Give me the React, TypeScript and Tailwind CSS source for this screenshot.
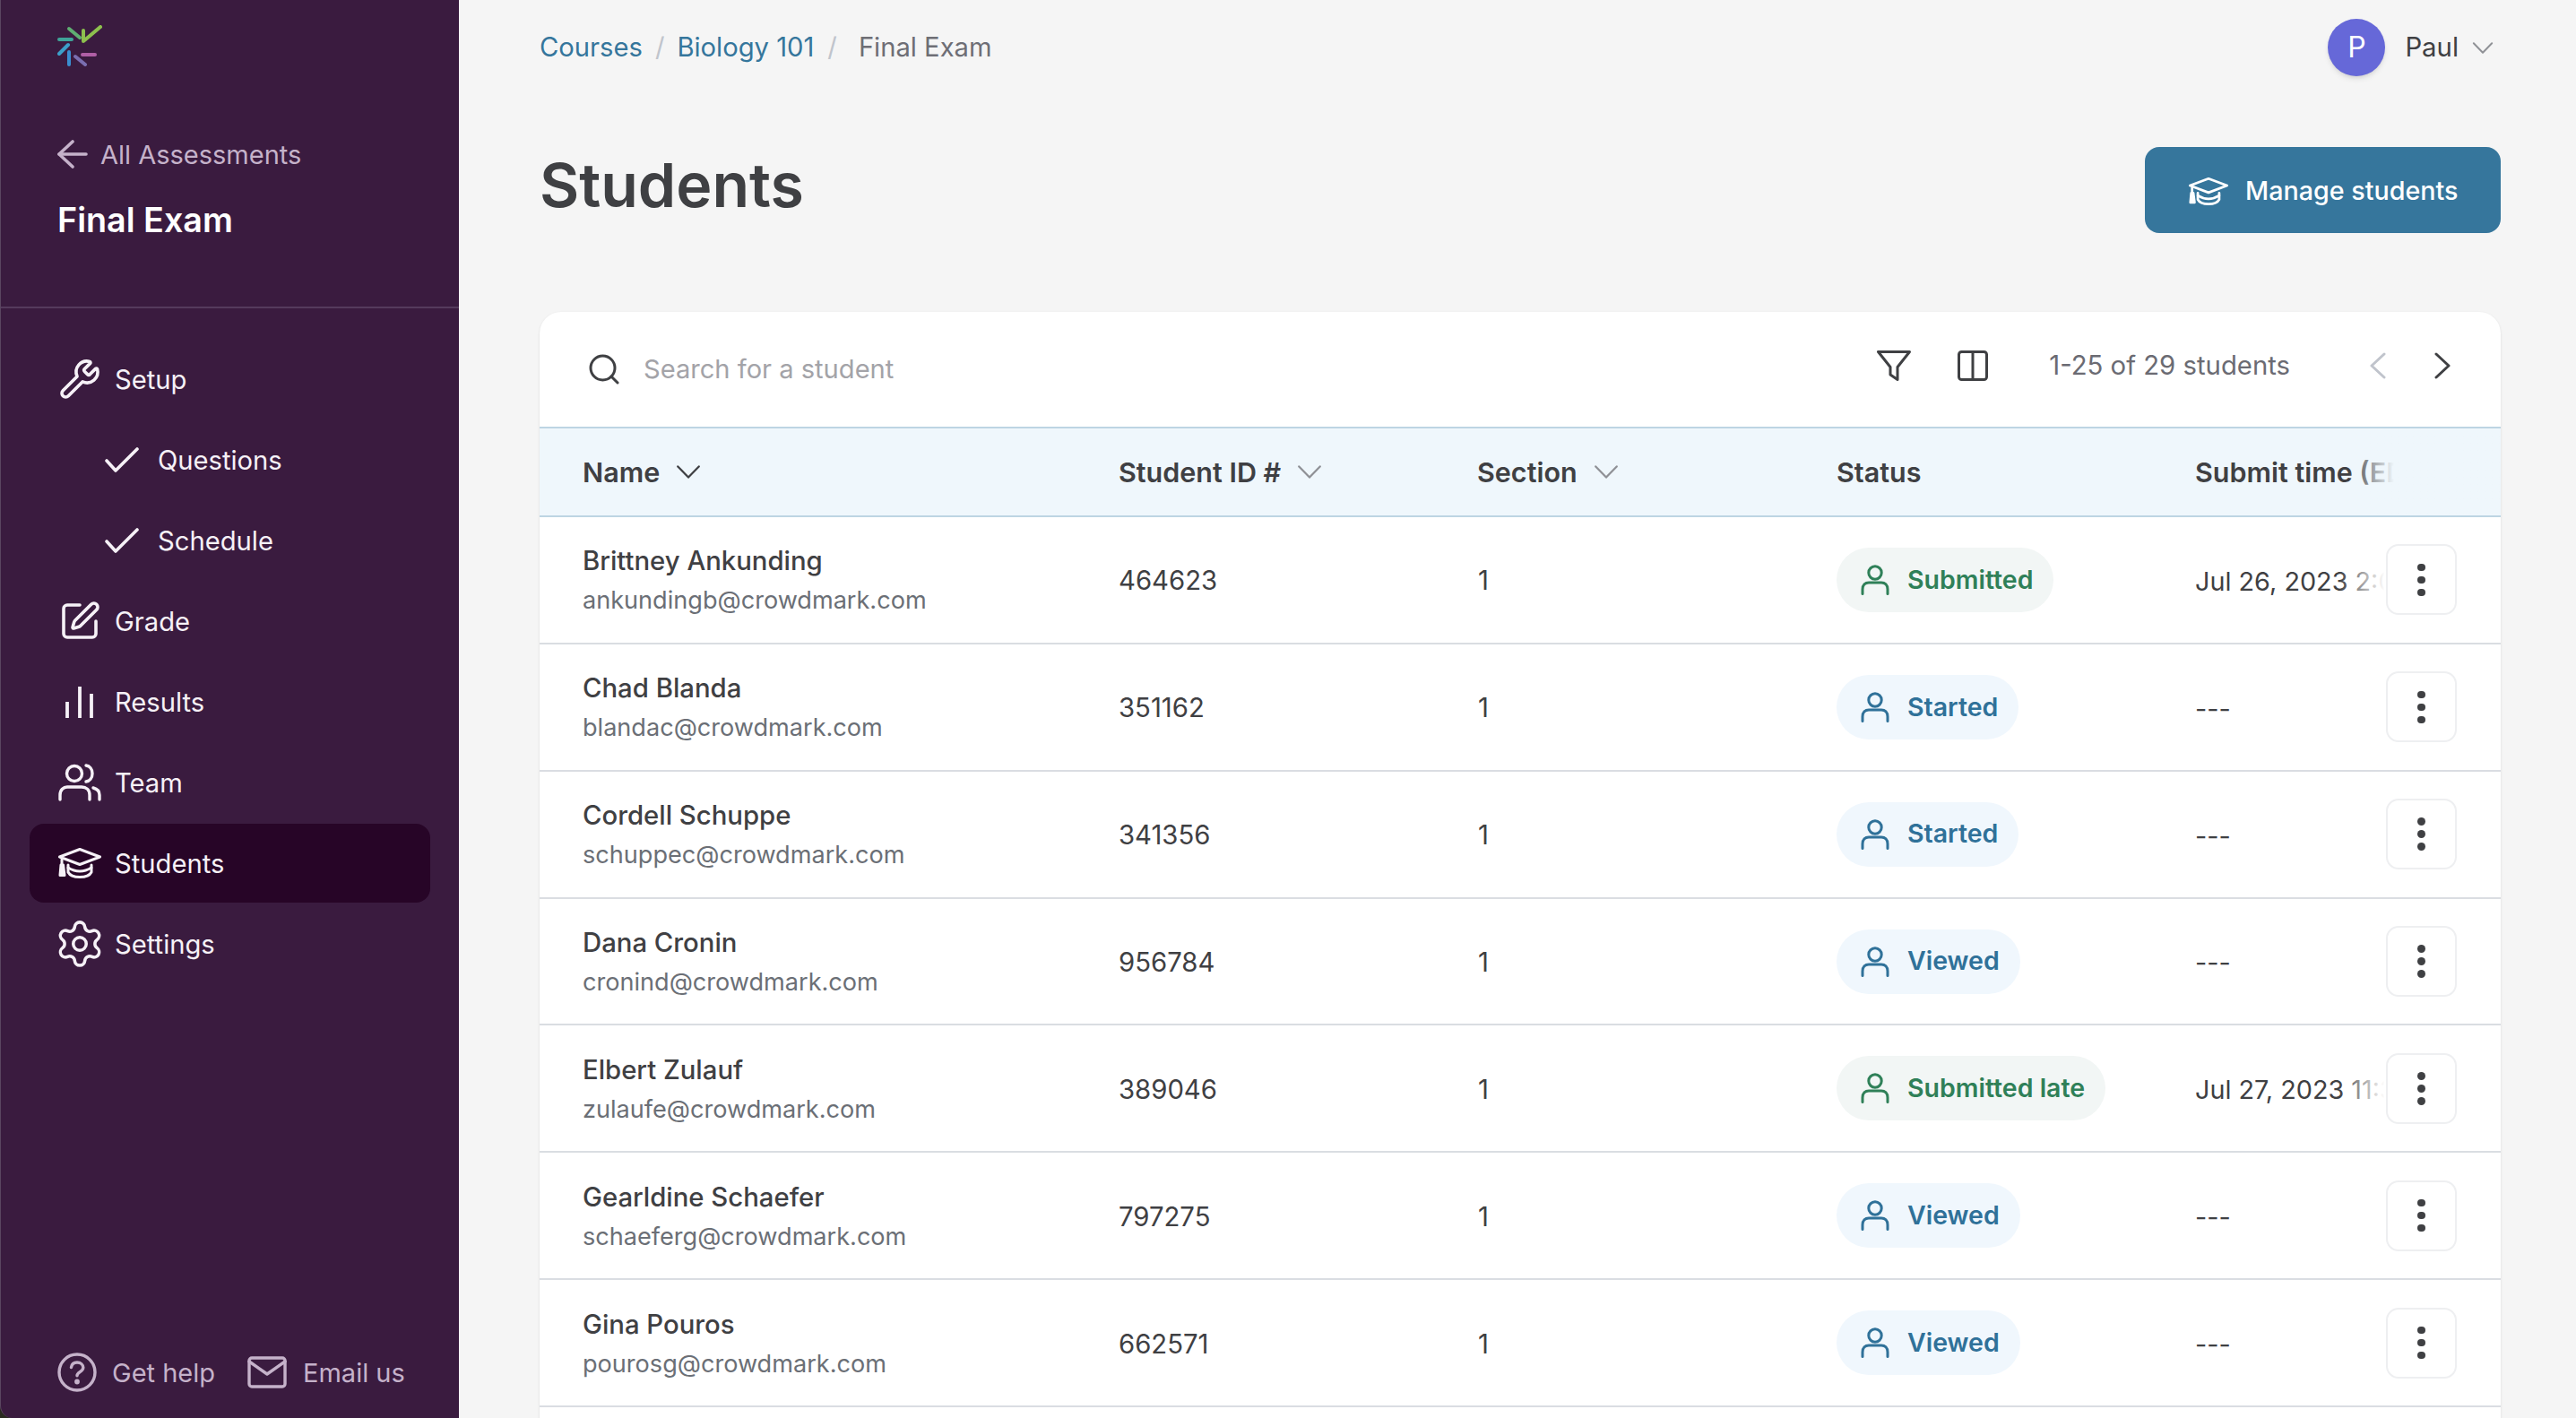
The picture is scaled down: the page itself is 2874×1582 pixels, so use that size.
import React from "react";
import {Settings, SquarePen, Wrench} from "lucide-react";

type Student = {
  name: string;
  email: string;
  id: string;
  status: "Submitted" | "Started" | "Viewed" | "Submitted late";
  time: string;
};

const students: Student[] = [
  {name: "Brittney Ankunding", email: "ankundingb@crowdmark.com", id: "464623", status: "Submitted", time: "Jul 26, 2023 2:00 PM"},
  {name: "Chad Blanda", email: "blandac@crowdmark.com", id: "351162", status: "Started", time: "---"},
  {name: "Cordell Schuppe", email: "schuppec@crowdmark.com", id: "341356", status: "Started", time: "---"},
  {name: "Dana Cronin", email: "cronind@crowdmark.com", id: "956784", status: "Viewed", time: "---"},
  {name: "Elbert Zulauf", email: "zulaufe@crowdmark.com", id: "389046", status: "Submitted late", time: "Jul 27, 2023 11:30 AM"},
  {name: "Gearldine Schaefer", email: "schaeferg@crowdmark.com", id: "797275", status: "Viewed", time: "---"},
  {name: "Gina Pouros", email: "pourosg@crowdmark.com", id: "662571", status: "Viewed", time: "---"},
];

const columns = "grid grid-cols-[646px_400px_401px_400px_1fr]";

function Chevron({className}: {className?: string}) {
  return (
    <svg viewBox="0 0 28 16" className={className} fill="none" stroke="currentColor" strokeWidth="2.4" strokeLinecap="round" strokeLinejoin="round">
      <path d="M1.5 1.5 14 14.5 26.5 1.5" />
    </svg>
  );
}

function CapIcon({className}: {className?: string}) {
  return (
    <svg viewBox="0 0 48 34" className={className} fill="none" stroke="currentColor" strokeWidth="3" strokeLinecap="round" strokeLinejoin="round">
      <path d="M24 1.500 46.500 10 24 18.500 1.500 10Z" />
      <path d="M11 19v8c2 4 7.500 5.500 13 5.500S35 31 37 27v-8" />
      <path d="M11 22c4 2.500 8.500 4 13 4s9-1.500 13-4" />
      <path d="M4 13v6" />
      <path d="M3 19h2.500l1.500 11.500H2Z" fill="currentColor" />
    </svg>
  );
}

function PersonIcon({className}: {className?: string}) {
  return (
    <svg viewBox="0 0 32 34" className={className} fill="none" stroke="currentColor" strokeWidth="3" strokeLinecap="round">
      <circle cx="16" cy="9" r="7.200" />
      <path d="M2 32.500v-5c0-5 3-7.500 7-7.500h14c4 0 7 2.500 7 7.500v5" />
    </svg>
  );
}

function NavRow({icon, label, active}: {icon: React.ReactNode; label: string; active?: boolean}) {
  return (
    <div className={`mx-[32px] flex h-[88px] items-center rounded-[16px] pl-[32px] ${active ? "bg-[#270527]" : ""}`}>
      <span className="flex w-[48px] justify-center">{icon}</span>
      <span className="ml-[15px] pt-[2px] text-[29.200px] leading-none text-[#f6f1f7]">{label}</span>
    </div>
  );
}

function SubRow({label}: {label: string}) {
  return (
    <div className="mx-[32px] flex h-[88px] items-center pl-[84px]">
      <svg viewBox="0 0 38 28" className="h-[28px] w-[38px]" fill="none" stroke="#f6f1f7" strokeWidth="3.600" strokeLinecap="round" strokeLinejoin="round">
        <path d="M2 15 12 26 36 2" />
      </svg>
      <span className="ml-[21px] pt-[2px] text-[29.200px] leading-none text-[#f6f1f7]">{label}</span>
    </div>
  );
}

function Sidebar() {
  return (
    <aside className="flex h-full w-[512px] shrink-0 flex-col rounded-bl-[14px] border-l border-[#5a4560] bg-[#3a1b3f]">
      <div className="h-[344px] border-b-2 border-[#553a5c] pl-[63px]">
        <svg viewBox="0 0 50 46" className="mt-[28px] h-[46px] w-[50px]" fill="none" strokeWidth="4" strokeLinecap="round" strokeLinejoin="round">
          <path d="M29 6v12L48 2" stroke="#8dc04e" />
          <path d="M13 4 25 14" stroke="#5fae72" />
          <path d="M2 16H16" stroke="#3fa398" />
          <path d="M12 22 2 32" stroke="#3c9fc9" />
          <path d="M13 30V44" stroke="#3a8ed0" />
          <path d="M20 35 31 44" stroke="#7a6eb0" />
          <path d="M28 33H42" stroke="#b05fa6" />
        </svg>
        <div className="mt-[78px] flex h-[40px] items-center text-[#c5b2ca]">
          <svg viewBox="0 0 34 32" className="h-[32px] w-[34px]" fill="none" stroke="currentColor" strokeWidth="3.600" strokeLinecap="round" strokeLinejoin="round">
            <path d="M32 16H2" />
            <path d="M17 2 2 16 17 30" />
          </svg>
          <span className="ml-[14px] text-[29px] leading-none">All Assessments</span>
        </div>
        <div className="mt-[30px] text-[37.700px] leading-[46px] font-semibold text-white">Final Exam</div>
      </div>
      <nav className="mt-[35px] flex flex-col gap-[2px]">
        <NavRow label="Setup" icon={<Wrench size={50} strokeWidth={1.800} color="#f6f1f7" className="scale-x-[-1] rotate-90" />} />
        <SubRow label="Questions" />
        <SubRow label="Schedule" />
        <NavRow label="Grade" icon={<SquarePen size={52} strokeWidth={1.800} color="#f6f1f7" />} />
        <NavRow
          label="Results"
          icon={
            <svg viewBox="0 0 48 48" className="h-[48px] w-[48px]" fill="none" stroke="#f6f1f7" strokeWidth="3.800">
              <path d="M10 24V42M24 7V42M37 15V42" />
            </svg>
          }
        />
        <NavRow
          label="Team"
          icon={
            <svg viewBox="0 0 48 42" className="h-[42px] w-[48px]" fill="none" stroke="#f6f1f7" strokeWidth="3.400" strokeLinecap="round">
              <circle cx="18" cy="11" r="8.500" />
              <path d="M31 2c4 .5 7 4 7 9s-3 8.500-7 9" />
              <path d="M2 40v-5c0-6 4-9 8-9h16c5 0 9 3 9 9v5" />
              <path d="M39 27c4 1 7 4 7 8v5" />
            </svg>
          }
        />
        <NavRow active label="Students" icon={<CapIcon className="h-[34px] w-[48px] text-[#f6f1f7]" />} />
        <NavRow label="Settings" icon={<Settings size={58} strokeWidth={1.450} color="#f6f1f7" className="shrink-0" />} />
      </nav>
      <div className="mt-auto mb-[29px] flex items-center pl-[63px] text-[#c5b2ca]">
        <svg viewBox="0 0 44 44" className="h-[44px] w-[44px]" fill="none" stroke="currentColor" strokeWidth="3.400" strokeLinecap="round" strokeLinejoin="round">
          <circle cx="22" cy="22" r="20" />
          <path d="M15.500 16.500c.5-3.500 3-5.500 6.500-5.500 4 0 6.800 2.500 6.800 5.800 0 4.700-6.800 5-6.800 9" />
          <circle cx="22" cy="32.500" r="1.200" fill="currentColor" />
        </svg>
        <span className="ml-[17px] text-[29px] leading-none">Get help</span>
        <svg viewBox="0 0 44 36" className="ml-[36px] h-[36px] w-[44px]" fill="none" stroke="currentColor" strokeWidth="3.400" strokeLinecap="round" strokeLinejoin="round">
          <rect x="2" y="2" width="40" height="32" rx="3" />
          <path d="M2 6 22 20 42 6" />
        </svg>
        <span className="ml-[18px] text-[29px] leading-none">Email us</span>
      </div>
    </aside>
  );
}

function StatusBadge({status}: {status: Student["status"]}) {
  const done = status === "Submitted" || status === "Submitted late";
  return (
    <span className={`inline-flex h-[72px] items-center rounded-full pr-[23px] pl-[27px] ${done ? "bg-[#f2f6f5] text-[#2f8058]" : "bg-[#f0f7fd] text-[#2f7199]"}`}>
      <PersonIcon className="h-[34px] w-[32px]" />
      <span className="ml-[20px] text-[28.500px] leading-none font-semibold">{status}</span>
    </span>
  );
}

function Row({student}: {student: Student}) {
  return (
    <div className={`${columns} relative h-[141.860px] items-center border-b-2 border-[#dadde2] text-[29.300px] text-[#3f4043]`}>
      <div className="pt-[3px] pl-[48px]">
        <div className="text-[29.300px] leading-[44px] font-medium">{student.name}</div>
        <div className="text-[27.100px] leading-[44px] text-[#6b6f76]">{student.email}</div>
      </div>
      <div className="pt-[3px]">{student.id}</div>
      <div className="pt-[3px] pl-[1px]">1</div>
      <div>
        <StatusBadge status={student.status} />
      </div>
      <div className="overflow-hidden pt-[3px] text-[28.800px] whitespace-nowrap">{student.time}</div>
      <div className="absolute top-0 right-0 bottom-0 flex w-[180px] items-center justify-end bg-linear-to-r from-transparent to-white to-[28%] pr-[49px]">
        <button className="flex h-[79px] w-[79px] flex-col items-center justify-center gap-[5.500px] rounded-[14px] border-2 border-[#eeeff1] bg-white">
          <span className="h-[8.500px] w-[8.500px] rounded-full bg-[#3f4043]" />
          <span className="h-[8.500px] w-[8.500px] rounded-full bg-[#3f4043]" />
          <span className="h-[8.500px] w-[8.500px] rounded-full bg-[#3f4043]" />
        </button>
      </div>
    </div>
  );
}

function HeaderCell({label, sort, dark}: {label: string; sort?: boolean; dark?: boolean}) {
  return (
    <div className="flex items-center whitespace-nowrap">
      <span>{label}</span>
      {sort && <Chevron className={`ml-[18px] h-[15px] w-[28px] ${dark ? "text-[#3f4043]" : "text-[#8f9196]"}`} />}
    </div>
  );
}

export default function App() {
  return (
    <div className="flex h-screen w-full overflow-hidden bg-[#2a2a20] font-['Inter',sans-serif]">
      <Sidebar />
      <main className="min-w-0 flex-1 bg-[#f5f5f5] pr-[84px] pl-[90px]">
        <div className="flex h-[106px] items-center justify-between">
          <div className="flex items-center text-[29.200px] leading-none">
            <span className="text-[#35769c]">Courses</span>
            <span className="mx-[14px] text-[#c0c4cc]">/</span>
            <span className="text-[#35769c]">Biology 101</span>
            <span className="mr-[24px] ml-[15px] text-[#c0c4cc]">/</span>
            <span className="text-[#6e6e75]">Final Exam</span>
          </div>
          <div className="mr-[8px] flex items-center">
            <span className="flex h-[64px] w-[64px] items-center justify-center rounded-full bg-[#6668d8] text-[32px] text-white shadow-md">P</span>
            <span className="ml-[22px] text-[29.300px] leading-none text-[#3f4043]">Paul</span>
            <Chevron className="ml-[15px] h-[13px] w-[24px] text-[#8f9196]" />
          </div>
        </div>

        <div className="flex h-[242px] items-start justify-between pt-[58px]">
          <h1 className="text-[68px] leading-[84px] font-semibold text-[#3f4043]">Students</h1>
          <button className="flex h-[96px] w-[397px] items-center rounded-[16px] bg-[#36769c] pt-[2px] pl-[49px] text-[28.700px] font-medium text-white">
            <CapIcon className="h-[33px] w-[44px]" />
            <span className="ml-[19px]">Manage students</span>
          </button>
        </div>

        <section className="rounded-t-[24px] bg-white pb-[40px] shadow-sm">
          <div className="flex h-[128px] items-center pl-[55px]">
            <svg viewBox="0 0 34 34" className="h-[34px] w-[34px]" fill="none" stroke="#3f4043" strokeWidth="3" strokeLinecap="round">
              <circle cx="15.500" cy="15.500" r="13.500" />
              <path d="M25 25 32 32" />
            </svg>
            <span className="ml-[27px] text-[29.100px] leading-none text-[#a3a3a8]">Search for a student</span>
            <div className="mr-[56px] ml-auto flex items-center pb-[8px]">
              <svg viewBox="0 0 38 34" className="h-[34px] w-[38px]" fill="none" stroke="#3f4043" strokeWidth="3" strokeLinejoin="round">
                <path d="M1.500 1.500h35L23 18.500V32.500L15 27V18.500Z" />
              </svg>
              <svg viewBox="0 0 34 34" className="ml-[52px] h-[34px] w-[34px]" fill="none" stroke="#3f4043" strokeWidth="3">
                <rect x="1.500" y="1.500" width="31" height="31" rx="3" />
                <path d="M17 1.500V32.500" />
              </svg>
              <span className="ml-[68px] text-[29.300px] leading-none text-[#6b6b73]">1-25 of 29 students</span>
              <svg viewBox="0 0 18 30" className="ml-[89px] h-[30px] w-[18px]" fill="none" stroke="#c0c4cc" strokeWidth="3" strokeLinecap="round" strokeLinejoin="round">
                <path d="M16 2 2 15 16 28" />
              </svg>
              <svg viewBox="0 0 18 30" className="ml-[54px] h-[30px] w-[18px]" fill="none" stroke="#3f4043" strokeWidth="3" strokeLinecap="round" strokeLinejoin="round">
                <path d="M2 2 16 15 2 28" />
              </svg>
            </div>
          </div>

          <div className={`${columns} relative h-[101px] items-center border-y-2 border-[#bdd5e3] bg-[#eff7fc] text-[30.500px] font-semibold text-[#3f4043]`}>
            <div className="pl-[48px]">
              <HeaderCell label="Name" sort dark />
            </div>
            <HeaderCell label="Student ID #" sort />
            <HeaderCell label="Section" sort />
            <HeaderCell label="Status" />
            <div className="overflow-hidden">
              <HeaderCell label="Submit time (EDT)" />
            </div>
            <div className="absolute top-0 right-0 bottom-0 w-[170px] bg-linear-to-r from-transparent to-[#eff7fc] to-[30%]" />
          </div>

          {students.map((s) => (
            <Row key={s.email} student={s} />
          ))}
        </section>
      </main>
    </div>
  );
}
